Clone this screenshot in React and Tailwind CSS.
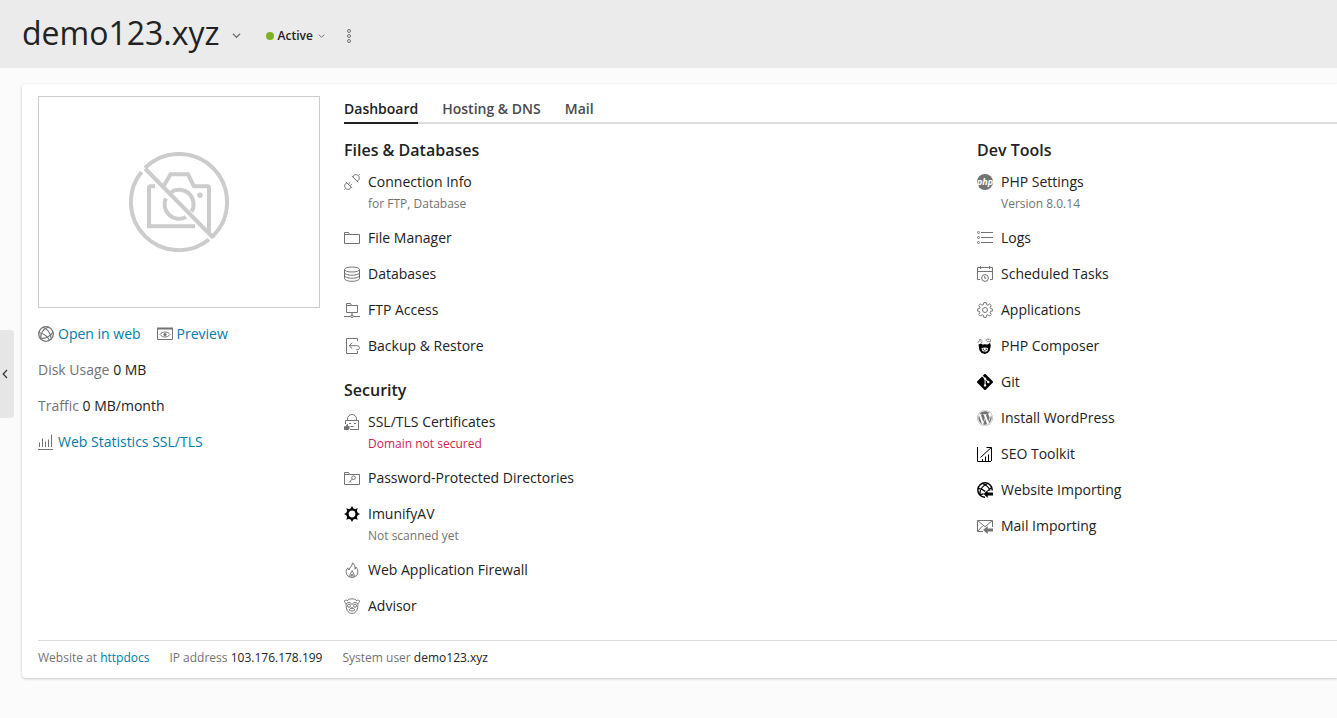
import React from "react";
import { FaWordpress } from "react-icons/fa";
import { SiGit } from "react-icons/si";

function Icon({ children, className = "text-[#737373]" }) {
  return (
    <svg
      viewBox="0 0 16 16"
      fill="none"
      stroke="currentColor"
      aria-hidden="true"
      className={`size-4 shrink-0 ${className}`}
    >
      {children}
    </svg>
  );
}

const Globe = () => (
  <Icon>
    <circle cx="8" cy="8" r="7.300" strokeWidth="1.300" />
    <g strokeWidth="1.200">
      <path d="M5 1.200C9.500 3 12.800 7 13.300 13" />
      <path d="M10.500 1C5.500 3 2.500 7.500 2.700 12.500" />
      <path d="M.7 6.500C5.500 7.500 9.500 10 11.500 14.500" />
      <path d="M1.500 12C6 13 11.500 11 15.200 6" />
    </g>
  </Icon>
);

const Preview = () => (
  <Icon>
    <path d="M.5 2.500h15v11H.5z" />
    <path d="M0 2.500h16" strokeWidth="2" />
    <path d="M3 8.500C4.300 6.800 6 6 8 6s3.700.8 5 2.500C11.700 10.200 10 11 8 11s-3.700-.8-5-2.500z" />
    <circle cx="8" cy="8.500" r="1.600" fill="currentColor" stroke="none" />
  </Icon>
);

const Stats = () => (
  <Icon>
    <path d="M0 15.500h15M1.500 13V8.500M4.500 13V4.500M7.500 13V7.500M10.500 13V5.500M13.500 13V.5" />
  </Icon>
);

const Connection = () => (
  <Icon>
    <path d="M7.800 1.900l6.300 6.300M9 3C9.300.7 12.600-.2 14.300 1.700c1.900 1.700 1 5-1.300 5.300M14.300 1.700L15.800.2" />
    <path d="M1.900 7.800l6.300 6.300M3 9C.7 9.300-.2 12.600 1.700 14.300c1.700 1.900 5 1 5.300-1.300M1.700 14.300L.2 15.800" />
    <path d="M4.400 10.200l1.900-1.900M6 11.800l1.900-1.900" />
  </Icon>
);

const Folder = () => (
  <Icon>
    <path d="M.5 13.500v-11h4l1 2h10v9zM.5 4.500h5" />
  </Icon>
);

const Database = () => (
  <Icon>
    <ellipse cx="8" cy="3.500" rx="7.500" ry="2.500" />
    <path d="M.5 3.500v9C.5 14 3.800 15.300 8 15.300s7.500-1.300 7.500-2.800v-9M.5 6.500C.5 8 3.800 9.200 8 9.200s7.500-1.200 7.500-2.700M.5 9.500c0 1.500 3.300 2.700 7.500 2.700s7.500-1.200 7.500-2.700" />
  </Icon>
);

const Ftp = () => (
  <Icon>
    <path d="M2.500 10.500v-9h4l1 2h6v7zM2.500 3.500h5M8 10.500v3M0 14.500h6.500M9.500 14.500H16" />
    <circle cx="8" cy="14.200" r="1.300" />
  </Icon>
);

const Backup = () => (
  <Icon>
    <path d="M13.500 3V.5h-11v15h11V13M8.300 4.800L5.200 7.700l3.100 3M5.500 7.700h7.300c3.500 0 3.500 4.100.2 4.100h-.8" />
  </Icon>
);

const Lock = () => (
  <Icon>
    <path d="M3.500 6.500V5a4.500 4.500 0 0 1 9 0v1.500M1.500 10V6.500h13v9H6M5 9.500h2M10 9.500h2M6.500 12.500h3" />
    <path d="M0 12.500l2-.5 1-2 1 .3v1.700h1.500v3L4 16H0z" fill="currentColor" stroke="none" />
  </Icon>
);

const KeyFolder = () => (
  <Icon>
    <path d="M.5 14.500v-12h4l1 2h10v10zM.5 4.500h5" />
    <circle cx="9.500" cy="7.700" r="1.800" />
    <path d="M8.300 9L5 12.500M6 11.300l1.300 1.200" />
  </Icon>
);

const Imunify = () => (
  <Icon className="text-black">
    <circle cx="8" cy="8" r="4.600" strokeWidth="2.400" />
    <path
      d="M8 0l1.600 3H6.400zM8 16l1.600-3H6.400zM0 8l3-1.600v3.200zM16 8l-3-1.600v3.200zM2.300 2.300l3.200 1-2.200 2.200zM13.700 2.300l-1 3.200-2.200-2.200zM13.700 13.700l-3.200-1 2.200-2.200zM2.300 13.700l1-3.200 2.200 2.200z"
      fill="currentColor"
      stroke="none"
    />
  </Icon>
);

const Flame = () => (
  <Icon>
    <path d="M8.500.8c.3 3-3 4.400-3.400 7.200C4.300 7.500 4 6.700 3.900 5.800 2.500 7.300 2 9 2.200 10.500 2.500 13.500 5 15.400 8 15.400s5.500-2 5.800-4.900c.3-2.400-.8-4-1.800-5.500-.1 1-.4 1.700-1 2.200C11.200 4.500 10.400 2.300 8.500.8z" />
    <path d="M8.200 8.500C7.800 10.500 5.500 11.500 5.700 15M8.200 8.500c.2 1.500 2.300 3 2.100 6.500M7.200 14.500c0-1.200.3-2 .8-2.500.6.500 1 1.300 1 2.500" />
  </Icon>
);

const Advisor = () => (
  <Icon>
    <path d="M3.500 2.500C5 .3 11 .3 12.500 2.500M2.500 5.500C1 5.500.5 4.300.6 2.600c1.200-.6 2.200-.6 3.300.2M13.500 5.500c1.500 0 2-1.200 1.900-2.900-1.200-.6-2.200-.6-3.300.2M2.200 5.500c-.4 5.500 1.300 9.900 5.800 9.900s6.200-4.400 5.800-9.900" />
    <path d="M2.500 5.500C4 4 6.500 4 8 6.500 9.500 4 12 4 13.500 5.500M5 11.800c1.500-2 4.500-2 6 0-1.500 1.500-4.500 1.500-6 0zM6.500 10h3" />
    <circle cx="5" cy="7.700" r="1.500" />
    <circle cx="11" cy="7.700" r="1.500" />
  </Icon>
);

const Php = () => (
  <Icon>
    <circle cx="8" cy="8" r="8" fill="currentColor" stroke="none" />
    <text
      x="8"
      y="10.500"
      textAnchor="middle"
      fill="#fff"
      stroke="none"
      className="font-['Open_Sans',sans-serif] text-[9px] font-bold italic"
    >
      php
    </text>
  </Icon>
);

const Logs = () => (
  <Icon>
    <path d="M4 2.500h12M4 7.500h12M4 12.500h12" />
    <circle cx="1.500" cy="2.500" r="1" />
    <circle cx="1.500" cy="7.500" r="1" />
    <circle cx="1.500" cy="12.500" r="1" />
  </Icon>
);

const Calendar = () => (
  <Icon>
    <path d="M3 13.500H.5v-12h15v12H13M.5 5.500h15M3.500 0v3M12.500 0v3" />
    <circle cx="8" cy="12" r="3.400" />
    <path d="M7.700 10.200v2.100h1.500" />
  </Icon>
);

const Gear = () => (
  <Icon>
    <path
      strokeLinejoin="round"
      d="M6.800.6h2.400l.4 2.100 1.300.5 1.800-1.200 1.600 1.600-1.200 1.800.5 1.300 2.100.4v1.800l-2.100.4-.5 1.300 1.200 1.800-1.600 1.600-1.800-1.200-1.300.5-.4 2.100H6.800l-.4-2.100-1.300-.5L3.300 14l-1.600-1.600 1.200-1.800-.5-1.300-2-.4V7.100l2-.4.5-1.300-1.200-1.800L3.300 2l1.800 1.200 1.300-.5z"
    />
    <circle cx="8" cy="8" r="2.500" />
  </Icon>
);

const Composer = () => (
  <Icon className="text-black">
    <path
      d="M1.500 6.500L4 5.500l2 1.200c1.200-.5 2.800-.5 4 0l3-1.700.8 2.500-1 5-1.800 2.300L8 16l-3.500-1L2.300 12z"
      fill="currentColor"
      stroke="none"
    />
    <path d="M4.500 10c2-.8 4.500-.8 6.500 0l-.5 3L8 14.300 5.300 13z" fill="#fff" stroke="none" />
    <path d="M5.700 11.200h1.300M8.700 11.200H10M6.700 13h2" />
    <path d="M1 4.800C1 3 2 2.500 3.500 3M2 2.200c1.200-1 2.500-.7 3 .5M4 4.500l1.500-.8M9 2.700c.3-1.700 2-2.200 3-1M10 4.300c.5-1.500 2.500-1.500 3 .2M12.500.8c1 .7 1.200 2 .8 3" stroke="#777" />
  </Icon>
);

const Seo = () => (
  <Icon className="text-black">
    <path d="M.5 1v14.500H14M3.500 11.500L14 1.800M9.500 1.500h5V15M5.500 15v-2M8.500 15v-4.500M11.500 15V8.500" />
  </Icon>
);

const WebImport = () => (
  <Icon className="text-black">
    <path d="M15.200 8.500A7.200 7.200 0 1 0 8 15.200" strokeWidth="1.500" />
    <path d="M5 1.300C9 3 12 5.500 13 8.500M10.800 1.500C5.500 3.500 2.800 7 2.900 12.500M1 6.300c3 .3 5.500 1.400 7.300 3.200M1.700 12c2.300.6 3.800.3 5-.2M14.700 5.500L11 8.800" strokeWidth="1.200" />
    <path d="M6.700 12L10.700 8v2.500H16v3h-5.300V16z" fill="currentColor" stroke="none" />
  </Icon>
);

const MailImport = () => (
  <Icon>
    <path d="M6 13.500H.5v-11h15V9M.7 2.700L8 8.700l7.300-6M.7 13.300L5.500 8" />
    <path d="M6 12l4.700-4v2.500H16v3h-5.300V16z" fill="currentColor" stroke="none" />
  </Icon>
);

const NoPhoto = () => (
  <svg viewBox="0 0 100 100" fill="none" stroke="#ccc" strokeWidth="4" aria-hidden="true" className="size-25">
    <path d="M80 87.500A48 48 0 0 1 12.500 20" />
    <path d="M16 16A48 48 0 0 1 84 84L84 85.500 16 16.500" strokeLinejoin="bevel" />
    <path d="M26 34.300h-4.500q-1.500 0-1.500 1.500V74.300H66" />
    <path d="M35 33.500L41.500 22.300h17.500L65 34.300h13.500q1.500 0 1.500 1.500V81" />
    <path d="M36.800 46.300A14.500 14.500 0 0 0 57 65" />
    <path d="M41.500 40.600A14.500 14.500 0 0 1 62.500 59.800" />
    <circle cx="71" cy="43.300" r="2.700" fill="#ccc" stroke="none" />
  </svg>
);

const files = [
  { icon: <Connection />, label: "Connection Info", note: "for FTP, Database" },
  { icon: <Folder />, label: "File Manager" },
  { icon: <Database />, label: "Databases" },
  { icon: <Ftp />, label: "FTP Access" },
  { icon: <Backup />, label: "Backup & Restore" },
];

const security = [
  { icon: <Lock />, label: "SSL/TLS Certificates", note: "Domain not secured", danger: true },
  { icon: <KeyFolder />, label: "Password-Protected Directories" },
  { icon: <Imunify />, label: "ImunifyAV", note: "Not scanned yet" },
  { icon: <Flame />, label: "Web Application Firewall" },
  { icon: <Advisor />, label: "Advisor" },
];

const devTools = [
  { icon: <Php />, label: "PHP Settings", note: "Version 8.0.14" },
  { icon: <Logs />, label: "Logs" },
  { icon: <Calendar />, label: "Scheduled Tasks" },
  { icon: <Gear />, label: "Applications" },
  { icon: <Composer />, label: "PHP Composer" },
  { icon: <SiGit className="size-4 shrink-0 text-black" aria-hidden="true" />, label: "Git" },
  { icon: <FaWordpress className="size-4 shrink-0 text-[#737373]" aria-hidden="true" />, label: "Install WordPress" },
  { icon: <Seo />, label: "SEO Toolkit" },
  { icon: <WebImport />, label: "Website Importing" },
  { icon: <MailImport />, label: "Mail Importing" },
];

function Section({ title, items }) {
  return (
    <section>
      <h2 className="mb-3 text-base leading-5 font-semibold">{title}</h2>
      <ul className="flex flex-col gap-4">
        {items.map((item) => (
          <li key={item.label}>
            <a href="#" className="flex items-center gap-2">
              {item.icon}
              {item.label}
            </a>
            {item.note && (
              <p
                className={`mt-1 pl-6 text-xs leading-4 ${
                  item.danger ? "text-[#d0244c]" : "text-[#737373]"
                }`}
              >
                {item.note}
              </p>
            )}
          </li>
        ))}
      </ul>
    </section>
  );
}

const Chevron = ({ className }) => (
  <svg viewBox="0 0 10 6" fill="none" stroke="currentColor" strokeWidth="1.400" aria-hidden="true" className={className}>
    <path d="M1 .8l4 4 4-4" />
  </svg>
);

export default function App() {
  return (
    <div className="flex min-h-screen flex-col bg-[#fbfbfb] font-['Open_Sans',sans-serif] text-sm leading-5 text-[#222]">
      <header className="flex h-17 items-center bg-[#ebebeb] pl-[22px]">
        <h1>
          <button type="button" className="flex items-center gap-3 pb-0.5 text-[32px] leading-10">
            demo123.xyz
            <Chevron className="mt-1.5 w-[9px] text-[#737373]" />
          </button>
        </h1>
        <button type="button" className="ml-[25px] flex items-center gap-1 pt-1 text-xs leading-4 font-semibold">
          <span className="size-2 rounded-full bg-[#80b027]" />
          Active
          <Chevron className="ml-px w-[7px] text-[#737373]" />
        </button>
        <button type="button" aria-label="More actions" className="ml-[21px] pt-1">
          <svg viewBox="0 0 6 16" fill="none" stroke="#737373" aria-hidden="true" className="h-4 w-1.5">
            <circle cx="3" cy="3" r="1.500" />
            <circle cx="3" cy="8" r="1.500" />
            <circle cx="3" cy="13" r="1.500" />
          </svg>
        </button>
      </header>

      <div className="flex items-start">
        <div className="w-[22px] shrink-0 pt-[262px]">
          <button
            type="button"
            aria-label="Expand sidebar"
            className="flex h-22 w-3.5 items-center rounded-r bg-[#e6e6e6] pl-0.5"
          >
            <svg viewBox="0 0 6 10" fill="none" stroke="#333" strokeWidth="1.200" aria-hidden="true" className="h-[10px] w-1.5">
              <path d="M5 1L1.200 5 5 9" />
            </svg>
          </button>
        </div>

        <main className="mt-4 min-w-0 flex-1 rounded-l bg-white pt-3 pl-4 shadow-[0_1px_3px_rgba(0,0,0,0.2)]">
          <div className="flex gap-6">
            <aside className="w-[282px] shrink-0">
              <div className="flex h-[212px] items-center justify-center border border-[#ccc]">
                <NoPhoto />
              </div>
              <div className="mt-4 flex flex-col gap-4 text-[#737373]">
                <div className="flex gap-4 text-[#007cad]">
                  <a href="#" className="flex items-center gap-1">
                    <Globe />
                    Open in web
                  </a>
                  <a href="#" className="flex items-center gap-1">
                    <Preview />
                    Preview
                  </a>
                </div>
                <p>
                  Disk Usage <span className="text-[#222]">0 MB</span>
                </p>
                <p>
                  Traffic <span className="text-[#222]">0 MB/month</span>
                </p>
                <a href="#" className="flex items-center gap-1 text-[#007cad]">
                  <Stats />
                  Web Statistics SSL/TLS
                </a>
              </div>
            </aside>

            <div className="min-w-0 flex-1">
              <nav className="flex gap-6 font-semibold text-[#4a4a4a] shadow-[inset_0_-2px_0_#dcdcdc]">
                <a href="#" aria-current="page" className="border-b-2 border-[#222] pt-[3px] pb-[3px] text-[#222]">
                  Dashboard
                </a>
                <a href="#" className="pt-[3px] pb-[5px]">
                  Hosting &amp; DNS
                </a>
                <a href="#" className="pt-[3px] pb-[5px]">
                  Mail
                </a>
              </nav>
              <div className="mt-4 grid grid-cols-[633fr_360fr]">
                <div className="flex flex-col gap-6">
                  <Section title="Files & Databases" items={files} />
                  <Section title="Security" items={security} />
                </div>
                <Section title="Dev Tools" items={devTools} />
              </div>
            </div>
          </div>

          <footer className="mt-6 flex gap-5 border-t border-[#dcdcdc] pt-2 pb-[11px] text-xs leading-[18px] text-[#737373]">
            <p>
              Website at{" "}
              <a href="#" className="text-[#007cad]">
                httpdocs
              </a>
            </p>
            <p>
              IP address <span className="text-[#222]">103.176.178.199</span>
            </p>
            <p>
              System user <span className="text-[#222]">demo123.xyz</span>
            </p>
          </footer>
        </main>
      </div>
    </div>
  );
}
